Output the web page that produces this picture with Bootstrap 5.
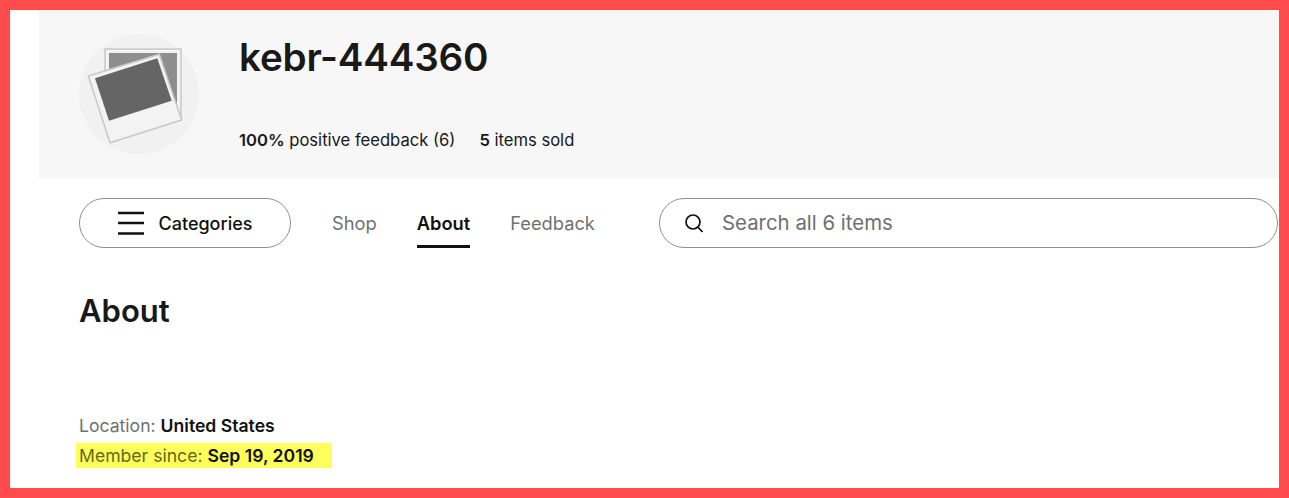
<!DOCTYPE html>
<html lang="en">
<head>
    <meta charset="UTF-8">
    <meta name="viewport" content="width=device-width, initial-scale=1.0">
    <title>kebr-444360 - About</title>
    <link href="https://cdn.jsdelivr.net/npm/bootstrap@5.3.0/dist/css/bootstrap.min.css" rel="stylesheet">
    <style>
        html, body { height: 100%; }
        body {
            font-family: Inter, "Liberation Sans", sans-serif;
            background: #fff;
            color: #191919;
            overflow: hidden;
        }
        .frame {
            width: 1289px;
            height: 498px;
            border: 10px solid #ff4b4b;
            overflow: hidden;
        }
        .store-head {
            margin-left: 29px;
            height: 168px;
            background: #f7f7f7;
            padding: 24px 0 0 40px;
            gap: 40px;
        }
        .avatar-disc {
            width: 120px;
            height: 120px;
            border-radius: 50%;
            background: #f1f1f1;
            flex-shrink: 0;
        }
        .store-name {
            font-size: 38.6px;
            line-height: 46px;
            font-weight: 600;
            letter-spacing: -0.2px;
            margin: 0;
        }
        .store-stats {
            margin-top: 49px;
            font-size: 16.6px;
            line-height: 22px;
            gap: 24px;
        }
        .store-stats b { font-weight: 600; }
        .shop-nav {
            margin-left: 69px;
            margin-top: 20px;
            height: 50px;
        }
        .cat-btn {
            width: 212px;
            height: 50px;
            border: 1px solid #8f8f8f;
            border-radius: 25px;
            background: #fff;
            font-size: 18px;
            font-weight: 500;
            color: #111;
            gap: 15px;
            padding: 0;
        }
        .nav-links {
            margin-left: 41px;
            gap: 40px;
            width: 327px;
        }
        .nav-tab {
            font-size: 18.3px;
            font-weight: 400;
            color: #707070;
            text-decoration: none;
            height: 50px;
            line-height: 50px;
        }
        .nav-tab.is-on {
            color: #111;
            font-weight: 600;
            border-bottom: 3px solid #111;
        }
        .search-pill {
            width: 619px;
            height: 50px;
            border: 1px solid #8f8f8f;
            border-radius: 25px;
            padding-left: 24px;
            gap: 18px;
            flex-shrink: 0;
        }
        .search-pill input {
            border: 0;
            outline: 0;
            padding: 0;
            flex: 1;
            font-size: 20.4px;
            background: transparent;
        }
        .search-pill input::placeholder { color: #707070; opacity: 1; }
        .about-title {
            margin: 44px 0 0 69px;
            font-size: 31px;
            line-height: 38px;
            font-weight: 600;
        }
        .facts {
            margin: 83px 0 0 66px;
            font-size: 17.6px;
        }
        .fact-row {
            height: 25px;
            line-height: 25px;
            padding-left: 3px;
            color: #707070;
            width: 256px;
            white-space: nowrap;
        }
        .fact-row b { color: #111; font-weight: 600; }
        .fact-gap { margin-top: 5px; }
        .marked {
            background: #ffff5c;
            color: #67671f;
        }
    </style>
</head>
<body>

<div class="frame">
    <!-- store header -->
    <div class="store-head d-flex">
        <div class="avatar-disc">
            <svg width="120" height="120" viewBox="0 0 120 120">
                <rect x="26" y="15" width="76" height="70" fill="#f3f3f3" stroke="#c8c8c8" stroke-width="1.5"/>
                <rect x="30" y="19" width="68" height="52" fill="#8e8e8e"/>
                <polygon points="9.3,42 80.3,20.3 102.7,86 31,108.7" fill="#f3f3f3" stroke="#c8c8c8" stroke-width="1.5"/>
                <polygon points="16,44.3 78.3,24.3 92.7,66.7 30,86.7" fill="#656565"/>
            </svg>
        </div>
        <div>
            <h1 class="store-name">kebr-444360</h1>
            <div class="store-stats d-flex">
                <span><b>100%</b> positive feedback (6)</span>
                <span><b>5</b> items sold</span>
            </div>
        </div>
    </div>

    <!-- nav row -->
    <div class="shop-nav d-flex align-items-center">
        <button class="cat-btn d-flex align-items-center justify-content-center" type="button">
            <svg width="26" height="24" viewBox="0 0 26 24">
                <path d="M0 2h26M0 12h26M0 22.500h26" stroke="#111" stroke-width="2.400" fill="none"/>
            </svg>
            Categories
        </button>
        <div class="nav-links d-flex">
            <a class="nav-tab" href="#">Shop</a>
            <a class="nav-tab is-on" href="#">About</a>
            <a class="nav-tab" href="#">Feedback</a>
        </div>
        <div class="search-pill d-flex align-items-center">
            <svg width="20" height="20" viewBox="0 0 20 20">
                <circle cx="9" cy="9" r="7" stroke="#111" stroke-width="1.7" fill="none"/>
                <path d="M13.8 14l4.7 5" stroke="#111" stroke-width="1.8" fill="none"/>
            </svg>
            <input type="text" placeholder="Search all 6 items">
        </div>
    </div>

    <h2 class="about-title">About</h2>

    <div class="facts">
        <div class="fact-row">Location: <b>United States</b></div>
        <div class="fact-row fact-gap marked">Member since: <b>Sep 19, 2019</b></div>
    </div>
</div>

<script src="https://cdn.jsdelivr.net/npm/bootstrap@5.3.0/dist/js/bootstrap.bundle.min.js"></script>
</body>
</html>
